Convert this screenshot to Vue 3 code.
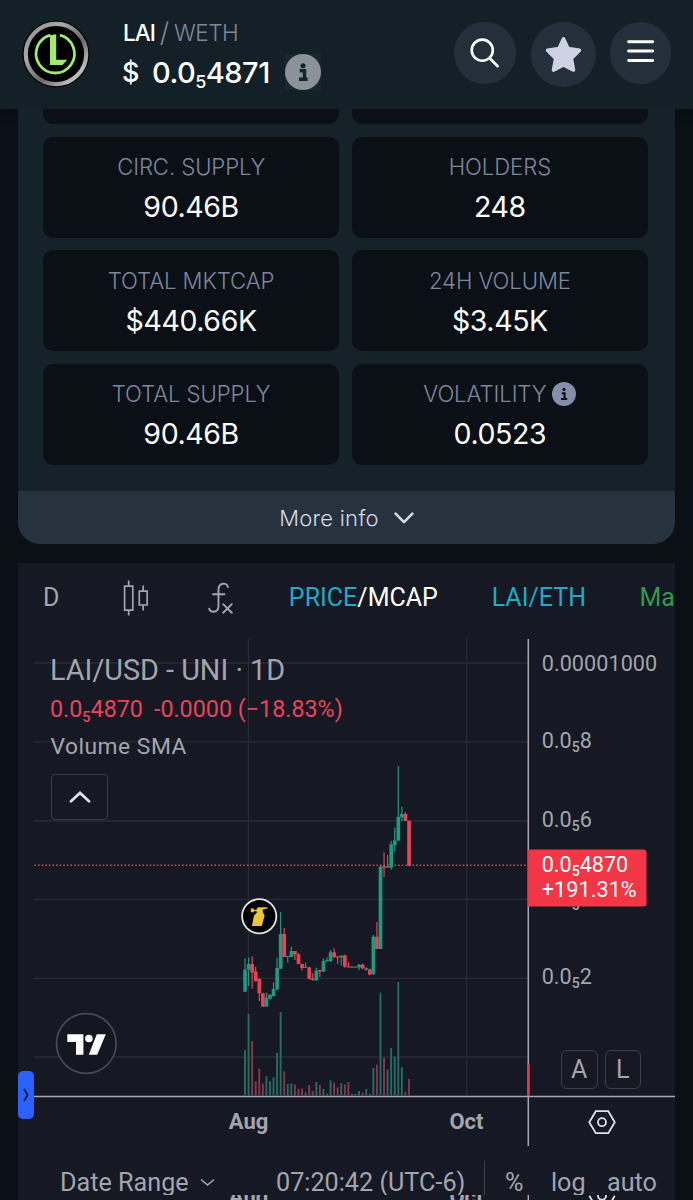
<template>
  <div class="screen">
    <header class="topbar">
      <svg class="token-logo" viewBox="0 0 68 68">
        <defs>
          <linearGradient id="rim" x1="0" y1="0" x2="1" y2="1">
            <stop offset="0" stop-color="#8d8d8f" />
            <stop offset="0.3" stop-color="#a9a9ab" />
            <stop offset="0.6" stop-color="#68686b" />
            <stop offset="0.85" stop-color="#bdbdc0" />
            <stop offset="1" stop-color="#6b6b6d" />
          </linearGradient>
        </defs>
        <circle cx="34" cy="34" r="33.6" fill="#050606" />
        <circle cx="34" cy="34" r="30.2" fill="#000" stroke="url(#rim)" stroke-width="4.2" />
        <path d="M28.5 15.2A19.2 19.2 0 1 0 38 15.2" fill="none" stroke="#a5e86a" stroke-width="2.8" />
        <path d="M28 15.2L34.2 14.2V39.8H45.4L40.4 45H28Z" fill="#a5e86a" />
      </svg>

      <div class="token">
        <div class="pair">
          <span class="base">LAI</span><span class="slash">/</span><span class="quote">WETH</span>
        </div>
        <div class="price">
          <span class="dollar">$</span>
          <span class="amount">0.0<span class="sub">5</span>4871</span>
          <span class="info-box">
            <svg viewBox="0 0 36 36">
              <circle cx="18" cy="18" r="18" fill="#8b9299" />
              <circle cx="18" cy="11.7" r="2.5" fill="#17232b" />
              <path d="M14.7 16.8H19.5V25M14 25.2H22.6" fill="none" stroke="#17232b" stroke-width="3.4" />
            </svg>
          </span>
        </div>
      </div>

      <div class="actions">
        <button class="round">
          <svg viewBox="0 0 62 62" fill="none" stroke="#fff" stroke-width="2.6" stroke-linecap="round">
            <circle cx="28.5" cy="28.4" r="10.6" />
            <path d="M36.3 36.8L44 44.6" />
          </svg>
        </button>
        <button class="round star">
          <svg viewBox="0 0 66 66" fill="#cfd2e3" stroke="#cfd2e3" stroke-width="3.6" stroke-linejoin="round">
            <path d="M33 17L37.6 26.8L49.2 28.8L41 37L43.2 48.8L33 43.6L22.8 48.8L25 37L16.8 28.8L28.4 26.8Z" />
          </svg>
        </button>
        <button class="round">
          <svg viewBox="0 0 62 62" stroke="#fff" stroke-width="3" stroke-linecap="round">
            <path d="M18.8 19.8H43M18.8 29.3H43M18.8 38.8H43" />
          </svg>
        </button>
      </div>
    </header>

    <section class="info">
      <div class="stats">
        <div class="stat cut"></div>
        <div class="stat cut"></div>
        <div v-for="stat in stats" :key="stat.label" class="stat">
          <div class="stat-label">
            {{ stat.label }}
            <svg v-if="stat.hint" class="hint" viewBox="0 0 24 24">
              <circle cx="12" cy="12" r="12" fill="#8490aa" />
              <circle cx="12" cy="7.4" r="1.6" fill="#0a1016" />
              <path d="M9.8 11.4H12.6V16.8M9 17H15.2" fill="none" stroke="#0a1016" stroke-width="2.1" />
            </svg>
          </div>
          <div class="stat-value">{{ stat.value }}</div>
        </div>
      </div>
      <button class="more">
        <span>More info</span>
        <svg viewBox="0 0 20 12" fill="none" stroke="#d5d9e8" stroke-width="2.6" stroke-linecap="round" stroke-linejoin="round">
          <path d="M1.6 1.6L10 10.2L18.4 1.6" />
        </svg>
      </button>
    </section>

    <section class="chart">
      <nav class="toolbar">
        <span class="interval">D</span>
        <svg class="candle-icon" viewBox="0 0 26 36" fill="none" stroke="#a3a5ae" stroke-width="1.7">
          <path d="M1.6 6.2H9.8V30.2H1.6ZM5.7 .5V6.2M5.7 30.2V35.5M16.3 11.2H24.2V25H16.3ZM20.2 5.6V11.2M20.2 25V30.6" />
        </svg>
        <svg class="fx-icon" viewBox="0 0 26 34" fill="none" stroke="#a3a5ae" stroke-width="1.9" stroke-linecap="round">
          <path d="M1.2 27.6C1.8 32.4 10.5 32 10.5 25V8.5C10.5 1.6 19 .8 20 6M5 13.2H16.5M15.2 23.2L23.8 31.8M23.8 23.2L15.2 31.8" />
        </svg>
        <span class="price-toggle"><b>PRICE</b>/MCAP</span>
        <span class="pair-toggle">LAI/ETH</span>
        <span class="market">Ma</span>
      </nav>

      <div class="plot">
        <svg class="canvas" viewBox="18 639 657 508">
          <g stroke="#282a35" stroke-width="1.3">
            <line v-for="y in gridRows" :key="y" x1="34" :y1="y" x2="528" :y2="y" />
            <line v-for="x in gridCols" :key="x" :x1="x" y1="639" :x2="x" y2="1096" />
          </g>

          <rect
            v-for="bar in bars"
            :key="'v' + bar.x"
            :x="bar.x - 0.95"
            :y="bar.volume"
            width="1.9"
            :height="1095.3 - bar.volume"
            :fill="bar.up ? '#256c66' : '#84394b'"
          />
          <g v-for="bar in bars" :key="'c' + bar.x" :fill="bar.up ? '#1f997f' : '#ea4156'">
            <rect :x="bar.x - 0.6" :y="bar.high" width="1.2" :height="bar.low - bar.high" />
            <rect :x="bar.x - 1.8" :y="bar.top" width="3.7" :height="bar.bottom - bar.top" />
          </g>

          <line x1="34.5" y1="865.3" x2="527" y2="865.3" stroke="#d04a5d" stroke-width="1.5" stroke-dasharray="1.5 2.1" />

          <path d="M34 1096.6H675M528.3 639V1146" stroke="#a5a7b1" stroke-width="1.5" />
          <rect x="527.2" y="1064" width="2.6" height="32" fill="#e03b4b" />

          <g class="scale">
            <text x="541.7" y="671" textLength="115.5">0.00001000</text>
            <text v-for="tick in ticks" :key="tick.digit" x="541.7" :y="tick.y">
              0.0<tspan class="tiny" dy="4">5</tspan><tspan dy="-4">{{ tick.digit }}</tspan>
            </text>
          </g>

          <path d="M528 849.5H643.5A3 3 0 0 1 646.5 852.5V903.5A3 3 0 0 1 643.5 906.5H528Z" fill="#f23645" />
          <g class="scale last">
            <text x="541.7" y="871.7">0.0<tspan class="tiny" dy="4">5</tspan><tspan dy="-4">4870</tspan></text>
            <text x="541.7" y="897.4" textLength="95">+191.31%</text>
          </g>

          <g class="months">
            <text x="248.5" y="1129.3">Aug</text>
            <text x="466.5" y="1129.3">Oct</text>
          </g>
          <g fill="none" stroke="#dfe1ea" stroke-width="1.8">
            <path d="M589.3 1122.2L595.8 1111.2H608.3L614.8 1122.2L608.3 1133.2H595.8Z" />
            <circle cx="602" cy="1122.2" r="4" />
          </g>

          <!-- spray bottle event marker -->
          <circle cx="259.2" cy="916.3" r="17.1" fill="#000" stroke="#e3e4e8" stroke-width="1.8" />
          <path d="M250.8 908.6L253.2 908.2L254 909.8H256.4L257.8 907.2H267.6V908.6L262.8 909.4V912L264.6 915.4L261.8 926H251.9L253.9 915.8L257 912.2L256.4 911.2H254L253.2 912.4L250.8 912Z" fill="#edc437" />

          <circle cx="86.3" cy="1043.5" r="29.8" fill="#141722" stroke="#474953" stroke-width="1.7" />
          <path d="M67.3 1034.2H83.4V1054.8H76V1042H67.3ZM96.8 1034.2H105.8L97.2 1054.8H88.8Z" fill="#fff" />
          <circle cx="88.9" cy="1038.5" r="3.8" fill="#fff" />
        </svg>

        <div class="legend">
          <div class="title">LAI/USD - UNI · 1D</div>
          <div class="change">
            <span>0.0<span class="sub">5</span>4870</span>
            <span>-0.0000 (−18.83%)</span>
          </div>
          <div class="study">Volume SMA</div>
          <button class="collapse">
            <svg viewBox="0 0 22 12" fill="none" stroke="#dcdee8" stroke-width="2.8" stroke-linecap="round">
              <path d="M2 10.2L11 2L20 10.2" />
            </svg>
          </button>
        </div>

        <div class="scale-modes">
          <span>A</span>
          <span>L</span>
        </div>

        <div class="drawer">
          <svg viewBox="0 0 6 14" fill="none" stroke="#101c4c" stroke-width="1.8">
            <path d="M1 1L4.6 7L1 13" />
          </svg>
        </div>
      </div>

      <footer class="range-bar">
        <span class="range">Date Range</span>
        <svg class="range-arrow" viewBox="0 0 15 9" fill="none" stroke="#a3a5ae" stroke-width="1.6">
          <path d="M1 1.5L7.5 7L14 1.5" />
        </svg>
        <span class="clock">07:20:42 (UTC-6)</span>
        <i class="divider"></i>
        <span class="percent">%</span>
        <span class="log">log</span>
        <span class="auto">auto</span>
      </footer>
      <svg class="next-axis" viewBox="18 1194.5 657 6">
        <g class="months">
          <text x="248.5" y="1203">Aug</text>
          <text x="466.5" y="1203">Oct</text>
        </g>
        <path d="M528.3 1194V1200" stroke="#a5a7b1" stroke-width="1.5" />
        <g fill="none" stroke="#dfe1ea" stroke-width="1.8">
          <path d="M589.3 1195.2L595.8 1206.2H608.3L614.8 1195.2" />
          <circle cx="602" cy="1195.2" r="4" />
        </g>
      </svg>
    </section>
  </div>
</template>

<script setup>
const stats = [
  { label: 'CIRC. SUPPLY', value: '90.46B' },
  { label: 'HOLDERS', value: '248' },
  { label: 'TOTAL MKTCAP', value: '$440.66K' },
  { label: '24H VOLUME', value: '$3.45K' },
  { label: 'TOTAL SUPPLY', value: '90.46B' },
  { label: 'VOLATILITY', value: '0.0523', hint: true }
]

const gridRows = [663, 741.8, 821, 899.3, 978.3, 1057]
const gridCols = [248.5, 466.7]

const ticks = [
  { digit: 8, y: 747.8 },
  { digit: 6, y: 826.7 },
  { digit: 4, y: 905.5 },
  { digit: 2, y: 984.3 }
]

// up, high, body top, body bottom, low, volume top
const series = [
  [1, 235, 269, 335, 335, 510],
  [1, 233, 252, 269, 318, 402],
  [0, 229, 252, 278, 326, 483],
  [0, 260, 275, 303, 305, 604],
  [0, 295, 297, 340, 363, 566],
  [0, 340, 340, 380, 380, 611],
  [1, 338, 353, 380, 380, 589],
  [1, 342, 345, 356, 359, 603],
  [1, 307, 327, 348, 349, 592],
  [1, 234, 264, 328, 330, 518],
  [1, 96, 162, 266, 266, 396],
  [0, 144, 162, 231, 231, 574],
  [1, 228, 228, 231, 248, 612],
  [1, 200, 213, 231, 232, 610],
  [0, 213, 213, 224, 240, 613],
  [0, 219, 223, 252, 252, 627],
  [0, 251, 252, 264, 272, 625],
  [1, 248, 260, 263, 264, 637],
  [0, 261, 262, 296, 299, 615],
  [0, 280, 295, 300, 302, 633],
  [1, 263, 272, 301, 302, 606],
  [0, 269, 270, 274, 291, 615],
  [1, 235, 243, 275, 276, 627],
  [1, 232, 240, 244, 245, 641],
  [1, 210, 217, 243, 246, 601],
  [0, 205, 217, 231, 234, 608],
  [0, 229, 229, 233, 252, 622],
  [1, 226, 227, 232, 256, 609],
  [0, 224, 226, 260, 263, 613],
  [0, 245, 259, 262, 263, 606],
  [0, 259, 260, 263, 263, 641],
  [1, 260, 260, 263, 263, 641],
  [1, 252, 254, 262, 270, 633],
  [0, 251, 254, 265, 268, 639],
  [1, 262, 265, 269, 272, 627],
  [0, 266, 268, 284, 284, 641],
  [1, 165, 170, 283, 284, 564],
  [0, 126, 170, 207, 208, 554],
  [1, -44, -40, 207, 207, 338],
  [0, -83, -41, -37, -9, 533],
  [1, -75, -41, -37, -37, 569],
  [1, -117, -107, -37, -31, 504],
  [1, -157, -119, -104, -85, 530],
  [1, -342, -189, -118, -118, 306],
  [1, -219, -198, -188, -177, 562],
  [0, -204, -198, -177, -177, 636],
  [0, -178, -178, -42, -42, 597]
]

const toY = (value) => 880 + value / 3

const bars = series.map(([up, high, top, bottom, low, volume], index) => ({
  x: 245 + index * 3.565,
  up,
  high: toY(high),
  top: toY(top),
  bottom: toY(bottom),
  low: toY(low),
  volume: toY(volume)
}))
</script>

<style>
body {
  margin: 0;
  background: #0a1016;
}
</style>

<style scoped>
.screen {
  width: 693px;
  height: 1200px;
  overflow: hidden;
  background: #0a1016;
  font-family: Inter, "Liberation Sans", sans-serif;
  color: #fff;
}

svg {
  display: block;
}

button {
  border: 0;
  padding: 0;
  font: inherit;
  color: inherit;
}

.topbar {
  display: flex;
  align-items: flex-start;
  box-sizing: border-box;
  height: 109px;
  padding: 20px 22px 0 22px;
  background: #142028;
  box-shadow: 0 2px 8px rgba(5, 10, 14, 0.6);
}

.token-logo {
  width: 68px;
  height: 68px;
}

.token {
  margin-left: 32px;
}

.pair {
  display: flex;
  align-items: center;
  height: 25px;
  font-size: 22.5px;
}

.base {
  width: 32px;
  margin-left: 1px;
  font-weight: 500;
  letter-spacing: -1px;
}

.slash {
  width: 19px;
  text-align: center;
  font-size: 27px;
  font-weight: 300;
  color: #7d879c;
}

.quote {
  font-weight: 300;
  letter-spacing: -0.5px;
  color: #7d879c;
}

.price {
  display: flex;
  align-items: center;
  height: 36px;
  margin-top: 9px;
  font-size: 29px;
  font-weight: 500;
}

.dollar {
  width: 30px;
  font-size: 27px;
}

.amount {
  width: 133px;
  letter-spacing: -0.5px;
}

.sub {
  position: relative;
  top: 5px;
  font-size: 0.62em;
  font-weight: 500;
  line-height: 0;
}

.info-box {
  width: 36px;
  height: 36px;
  background: #1a262e;
}

.actions {
  display: flex;
  gap: 15px;
  margin-left: auto;
}

.round {
  width: 61.5px;
  height: 61.5px;
  margin-top: 2px;
  border-radius: 50%;
  background: #23303b;
}

.star {
  width: 65px;
  height: 65px;
  margin-right: -1px;
}

.info {
  margin: 0 18px;
  overflow: hidden;
  border-radius: 0 0 22px 22px;
  background: #152229;
}

.stats {
  display: grid;
  grid-template-columns: 1fr 1fr;
  gap: 12.6px;
  padding: 0 27px 26px 25px;
}

.stat {
  box-sizing: border-box;
  height: 101px;
  padding-top: 16px;
  border-radius: 10px;
  background: #0a1016;
  text-align: center;
}

.stat.cut {
  height: 15.2px;
  padding: 0;
  border-radius: 0 0 10px 10px;
}

.stat-label {
  display: flex;
  justify-content: center;
  align-items: center;
  gap: 6px;
  height: 28px;
  font-size: 22.2px;
  font-weight: 350;
  letter-spacing: -0.1px;
  color: #7d879c;
}

.hint {
  width: 24px;
  height: 24px;
}

.stat-value {
  height: 34px;
  margin-top: 9.5px;
  font-size: 28.5px;
  line-height: 34px;
  letter-spacing: -0.4px;
}

.more {
  display: flex;
  justify-content: center;
  align-items: center;
  gap: 15px;
  width: 100%;
  height: 53.5px;
  background: #26323d;
  font-size: 22px;
  font-weight: 350;
  letter-spacing: 0.2px;
  color: #d5d9e8;
}

.more svg {
  width: 20px;
  height: 12px;
}

.chart {
  height: 637px;
  margin: 18.6px 18px 0;
  overflow: hidden;
  background: #161823;
  font-family: Roboto, "Liberation Sans", sans-serif;
  color: #a3a5ae;
}

.toolbar {
  display: flex;
  align-items: center;
  height: 69px;
  margin-bottom: 6.9px;
  font-size: 25px;
  white-space: nowrap;
}

.interval {
  width: 80px;
  margin-left: 25px;
}

.candle-icon {
  width: 26px;
  height: 36px;
}

.fx-icon {
  width: 26px;
  height: 34px;
  margin-left: 59px;
}

.price-toggle {
  width: 203px;
  margin-left: 55px;
  color: #fff;
}

.price-toggle b {
  font-weight: 400;
  color: #1fabc7;
}

.pair-toggle {
  width: 148px;
  color: #1fabc7;
}

.market {
  color: #2f9a4f;
}

.plot {
  position: relative;
  height: 508px;
}

.canvas {
  width: 657px;
  height: 508px;
}

.scale {
  font-size: 21.6px;
  fill: #a3a5ae;
}

.last {
  fill: #fff;
}

.tiny {
  font-size: 14px;
  font-weight: 500;
}

.months {
  font-size: 22px;
  font-weight: 700;
  text-anchor: middle;
  fill: #a3a5ae;
}

.legend {
  position: absolute;
  top: 14px;
  left: 32px;
}

.title {
  height: 34px;
  font-size: 28.8px;
  line-height: 34px;
}

.change {
  display: flex;
  gap: 11px;
  height: 40px;
  margin-top: 2px;
  line-height: 40px;
  font-size: 23.3px;
  color: #e8445a;
}

.study {
  height: 36px;
  margin-left: 0.5px;
  line-height: 35px;
  font-size: 22.8px;
  letter-spacing: 0.5px;
}

.collapse {
  display: flex;
  align-items: center;
  justify-content: center;
  box-sizing: border-box;
  width: 57px;
  height: 46px;
  margin: 9.5px 0 0 1px;
  border: 1.5px solid #3a3c47;
  border-radius: 4px;
  background: none;
}

.collapse svg {
  width: 22px;
  height: 12px;
}

.scale-modes {
  position: absolute;
  top: 411px;
  left: 543px;
  display: flex;
  gap: 7px;
}

.scale-modes span {
  box-sizing: border-box;
  width: 36.5px;
  height: 39px;
  border: 1.5px solid #3d3f4a;
  border-radius: 6px;
  font-size: 25px;
  line-height: 37px;
  text-align: center;
}

.drawer {
  position: absolute;
  top: 432px;
  left: 0;
  display: flex;
  align-items: center;
  justify-content: center;
  width: 16px;
  height: 48px;
  border-radius: 5px;
  background: #2962ff;
}

.drawer svg {
  width: 6px;
  height: 14px;
}

.range-bar {
  display: flex;
  align-items: center;
  height: 25px;
  padding: 23px 0 0 42px;
  font-size: 25.2px;
  line-height: 25px;
  white-space: nowrap;
  overflow: hidden;
}

.range {
  width: 140px;
}

.range-arrow {
  width: 15px;
  height: 9px;
}

.clock {
  width: 208px;
  margin-left: 61px;
}

.divider {
  width: 1px;
  height: 34px;
  margin-top: -8px;
  background: #3d3f4a;
}

.percent {
  width: 46px;
  margin-left: 20px;
}

.log {
  width: 56px;
}

.next-axis {
  width: 657px;
  height: 6px;
}
</style>
